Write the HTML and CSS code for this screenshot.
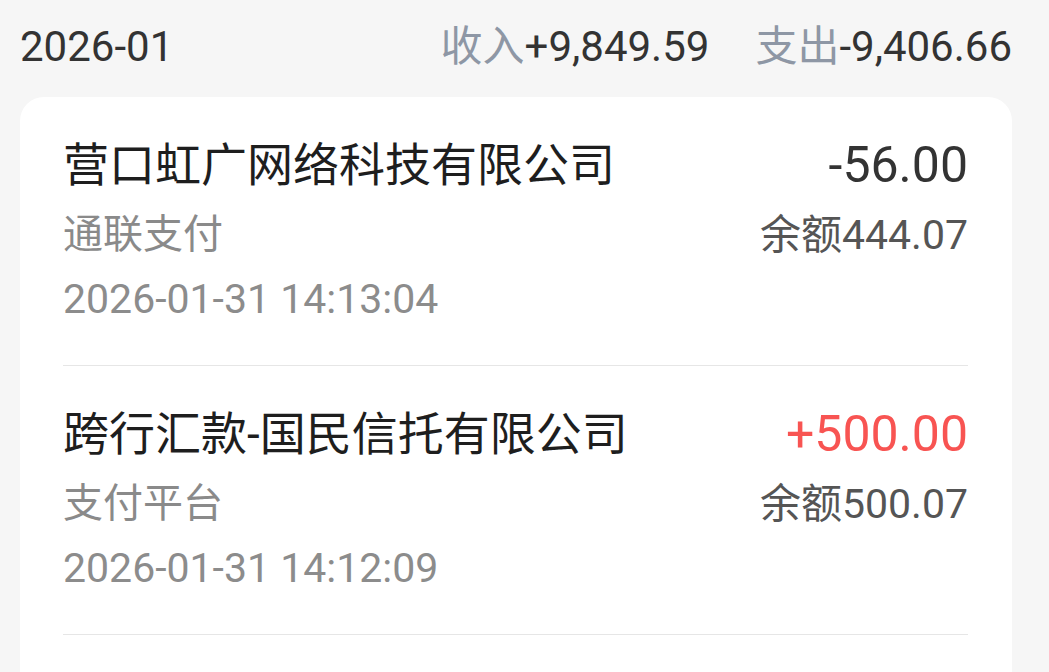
FILE: index.html
```html
<!DOCTYPE html>
<html lang="zh-CN">
<head>
    <meta charset="UTF-8">
    <meta name="viewport" content="width=device-width, initial-scale=1.0">
    <title>账单明细</title>
    <link rel="stylesheet" href="styles.css">
</head>
<body>
    <div class="summary">
        <div class="month">2026-01</div>
        <div class="totals">
            <span class="total"><span class="label">收入</span>+9,849.59</span>
            <span class="total"><span class="label">支出</span>-9,406.66</span>
        </div>
    </div>

    <div class="card">
        <div class="item">
            <div class="title">营口虹广网络科技有限公司</div>
            <div class="amount">-56.00</div>
            <div class="channel">通联支付</div>
            <div class="balance">余额444.07</div>
            <div class="time">2026-01-31 14:13:04</div>
        </div>
        <div class="item">
            <div class="title">跨行汇款-国民信托有限公司</div>
            <div class="amount income">+500.00</div>
            <div class="channel">支付平台</div>
            <div class="balance">余额500.07</div>
            <div class="time">2026-01-31 14:12:09</div>
        </div>
        <div class="item">
            <div class="title">&nbsp;</div>
        </div>
    </div>
</body>
</html>
```

FILE: styles.css
```css
body {
    margin: 0;
    background: #f6f6f6;
    font-family: Roboto, "Noto Sans CJK SC", sans-serif;
    overflow: hidden;
}

.summary {
    display: flex;
    justify-content: space-between;
    align-items: center;
    padding: 22px 37px 0 20px;
    line-height: 50px;
    color: #333;
}

.month {
    font-size: 42px;
}

.totals {
    display: flex;
    gap: 46px;
    font-size: 42px;
}

.label {
    color: #8e97a5;
}

.card {
    margin: 25px 37px 0 20px;
    padding: 0 44px 0 43px;
    background: #fff;
    border-radius: 24px;
}

.item {
    display: grid;
    grid-template-columns: 1fr auto;
    padding: 40px 0 38px;
    border-bottom: 1px solid #e6e6e6;
}

.title {
    font-size: 46px;
    line-height: 56px;
    color: #1e1e1e;
}

.amount {
    font-size: 50px;
    line-height: 56px;
    color: #333;
    text-align: right;
}

.amount.income {
    color: #f85452;
}

.channel,
.balance {
    margin-top: 14px;
    font-size: 40px;
    line-height: 56px;
}

.channel {
    color: #8a8a8a;
}

.balance {
    font-size: 41px;
    color: #555;
    text-align: right;
}

.time {
    grid-column: 1 / 3;
    margin-top: 8px;
    font-size: 41px;
    line-height: 56px;
    color: #8c8c8c;
}
```
